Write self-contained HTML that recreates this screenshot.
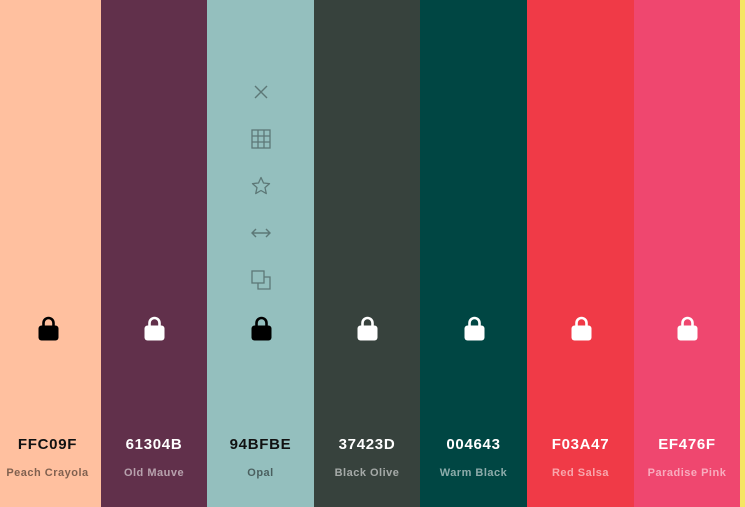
<!DOCTYPE html>
<html><head><style>
body{margin:0;width:745px;height:507px;overflow:hidden;background:#f5e663;font-family:"Liberation Sans",Arial,sans-serif}
.c{position:absolute;top:0;height:507px}
.lock{position:absolute;left:50%;top:316px;margin-left:-10px;width:21px;height:25px}
.hex{position:absolute;top:436px;left:0;width:100%;text-align:center;font-weight:bold;font-size:15px;letter-spacing:.7px}
.nm{position:absolute;top:467px;left:0;width:100%;text-align:center;font-weight:bold;font-size:11px;letter-spacing:.5px}
.d .hex{color:#111}.d .nm{color:rgba(0,0,0,.5)}
.l .hex{color:#fff}.l .nm{color:rgba(255,255,255,.55)}
.ic{position:absolute;left:251px;width:20px;height:20px}
</style></head><body>
<svg width="0" height="0" style="position:absolute"><defs><symbol id="lk" viewBox="0 0 21 25"><path d="M5.5 10V7a5 5 0 0 1 10 0v3" fill="none" stroke="currentColor" stroke-width="2.6"/><rect x="0.5" y="9.5" width="20" height="15" rx="3" fill="currentColor"/></symbol></defs></svg>
<div class="c d" style="left:-6px;width:107px;background:#ffc09f"><svg class="lock" style="color:#000"><use href="#lk"/></svg><div class="hex">FFC09F</div><div class="nm">Peach Crayola</div></div>
<div class="c l" style="left:101px;width:106px;background:#61304b"><svg class="lock" style="color:#fff"><use href="#lk"/></svg><div class="hex">61304B</div><div class="nm">Old Mauve</div></div>
<div class="c d" style="left:207px;width:107px;background:#94bfbe"><svg class="lock" style="color:#000"><use href="#lk"/></svg><div class="hex">94BFBE</div><div class="nm">Opal</div></div>
<div class="c l" style="left:314px;width:106px;background:#37423d"><svg class="lock" style="color:#fff"><use href="#lk"/></svg><div class="hex">37423D</div><div class="nm">Black Olive</div></div>
<div class="c l" style="left:420px;width:107px;background:#004643"><svg class="lock" style="color:#fff"><use href="#lk"/></svg><div class="hex">004643</div><div class="nm">Warm Black</div></div>
<div class="c l" style="left:527px;width:107px;background:#f03a47"><svg class="lock" style="color:#fff"><use href="#lk"/></svg><div class="hex">F03A47</div><div class="nm">Red Salsa</div></div>
<div class="c l" style="left:634px;width:106px;background:#ef476f"><svg class="lock" style="color:#fff"><use href="#lk"/></svg><div class="hex">EF476F</div><div class="nm">Paradise Pink</div></div>
<svg class="ic" style="top:82px" viewBox="0 0 20 20" fill="none" stroke="#5d7877" stroke-width="1.4"><path d="M4 4l12 12M16 4L4 16"/></svg>
<svg class="ic" style="top:129px" viewBox="0 0 20 20" fill="none" stroke="#5d7877" stroke-width="1.3"><rect x="1" y="1" width="18" height="18"/><path d="M7 1v18M13 1v18M1 7h18M1 13h18"/></svg>
<svg class="ic" style="top:176px" viewBox="0 0 20 20" fill="none" stroke="#5d7877" stroke-width="1.3" stroke-linejoin="round"><path d="M10 1.5l2.5 5.5 6 .6-4.5 4 1.3 6-5.3-3.1-5.3 3.1 1.3-6-4.5-4 6-.6z"/></svg>
<svg class="ic" style="top:223px" viewBox="0 0 20 20" fill="none" stroke="#5d7877" stroke-width="1.4"><path d="M1 10h18M5 6l-4 4 4 4M15 6l4 4-4 4"/></svg>
<svg class="ic" style="top:270px" viewBox="0 0 20 20" fill="none" stroke="#5d7877" stroke-width="1.3"><rect x="1" y="1" width="12" height="12"/><path d="M13 7h6v12H7v-6"/></svg>
</body></html>
